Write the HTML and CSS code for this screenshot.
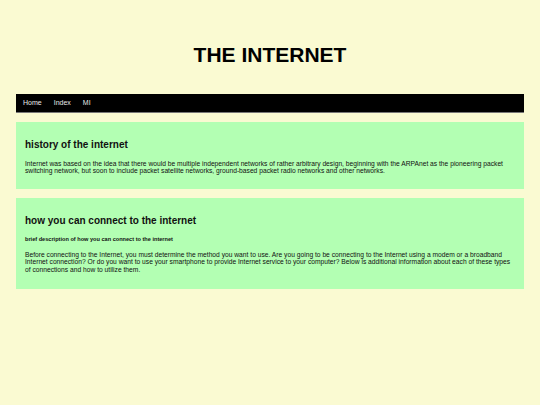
FILE: index.html
```html
<!DOCTYPE html>
<html lang="en">
<head>
<meta charset="utf-8">
<title>The Internet</title>
<link rel="stylesheet" href="styles.css">
</head>
<body>
<header class="masthead">
  <h1 class="title">THE INTERNET</h1>
</header>
<nav class="topnav">
  <a href="#" class="navlink">Home</a>
  <a href="#" class="navlink">Index</a>
  <a href="#" class="navlink">MI</a>
</nav>
<main class="content">
  <section class="card card-history">
    <h2 class="card-title">history of the internet</h2>
    <p class="card-text">Internet was based on the idea that there would be multiple independent networks of rather arbitrary design, beginning with the ARPAnet as the pioneering packet switching network, but soon to include packet satellite networks, ground-based packet radio networks and other networks.</p>
  </section>
  <section class="card card-connect">
    <h2 class="card-title">how you can connect to the internet</h2>
    <h4 class="card-sub">brief description of how you can connect to the internet</h4>
    <p class="card-text">Before connecting to the Internet, you must determine the method you want to use. Are you going to be connecting to the Internet using a modem or a broadband Internet connection? Or do you want to use your smartphone to provide Internet service to your computer? Below is additional information about each of these types of connections and how to utilize them.</p>
  </section>
</main>
</body>
</html>
```
FILE: styles.css
```css
html, body {
  margin: 0;
  padding: 0;
}
body {
  background: #fafad2;
  font-family: "Liberation Sans", Arial, sans-serif;
  color: #000;
  padding: 0 16px;
  min-height: 405px;
  box-sizing: border-box;
}
.masthead {
  padding-top: 43px;
  height: 94px;
  box-sizing: border-box;
}
.title {
  margin: 0;
  text-align: center;
  font-size: 21px;
  line-height: 24px;
  font-weight: bold;
}
.topnav {
  background: #000;
  height: 19px;
  border-bottom: 1px solid #777;
  box-sizing: border-box;
  display: flex;
  align-items: center;
  padding-left: 7px;
  gap: 12px;
}
.navlink {
  color: #e8e8e8;
  text-decoration: none;
  font-size: 7px;
  line-height: 8px;
}
.content {
  display: flex;
  flex-direction: column;
  gap: 9px;
  padding-top: 9px;
}
.card {
  background: #b3ffb3;
  padding: 17px 9px 13px 9px;
  box-sizing: border-box;
}
.card-history {
  height: 67px;
}
.card-connect {
  height: 91px;
}
.card-title {
  margin: 0;
  font-size: 10px;
  line-height: 12px;
  font-weight: bold;
  color: #111;
}
.card-sub {
  margin: 9px 0 0 0;
  font-size: 5.6px;
  line-height: 7px;
  font-weight: bold;
  color: #111;
}
.card-text {
  margin: 8px 0 0 0;
  font-size: 6.7px;
  line-height: 7.3px;
  color: #111;
}
.card-history .card-text {
  margin-top: 9px;
}
```
